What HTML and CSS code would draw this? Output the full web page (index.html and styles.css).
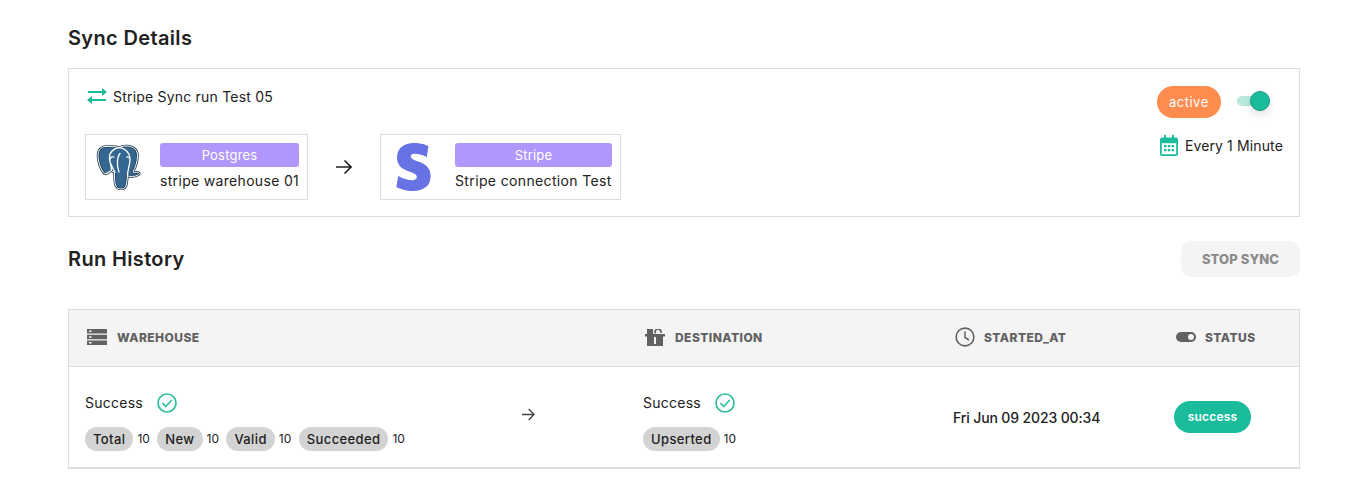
FILE: index.html
```html
<!DOCTYPE html>
<html lang="en">
<head>
<meta charset="utf-8">
<title>Sync Details</title>
<link rel="stylesheet" href="styles.css">
</head>
<body>
<main class="page">
  <h1 class="title first">Sync Details</h1>
  <section class="card">
    <div class="card-left">
      <div class="sync-name">
        <svg class="swap" viewBox="0 0 20 16" width="20" height="16"><path fill="#1abc9c" d="M1 3h14V0l5 4-5 4V5H1zM19 11H5V8l-5 4 5 4v-3h14z"/></svg>
        <span>Stripe Sync run Test 05</span>
      </div>
      <div class="connectors">
        <div class="conn conn-a">
          <svg class="logo-pg" viewBox="0 0 45 46" width="45" height="46">
            <path d="M12 2.500C6 2 2 5.500 2 11.500C2 17 4.500 25 7.500 28.500C9.500 30.500 12 30 15 26.500L18.500 28.500C18.500 33 18.500 38 19.500 41C20.500 44 22.500 45 25 45C28.500 45 30 43 30.500 40L31.500 32C34 32.500 39 33 42 31C44 30 43.500 28.500 42 28.300C40 28.300 38.500 28.800 37 28C39 24 41.500 18 41.500 12C41.500 6 38 2.500 31 2C28 1.800 25.500 2.500 23.500 3.500C20 2.500 16 2.700 12 2.500Z" fill="#336791" stroke="#1f3f57" stroke-width="2.600" stroke-linejoin="round"/>
            <path d="M12 2.500C6 2 2 5.500 2 11.500C2 17 4.500 25 7.500 28.500C9.500 30.500 12 30 15 26.500L18.500 28.500C18.500 33 18.500 38 19.500 41C20.500 44 22.500 45 25 45C28.500 45 30 43 30.500 40L31.500 32C34 32.500 39 33 42 31C44 30 43.500 28.500 42 28.300C40 28.300 38.500 28.800 37 28C39 24 41.500 18 41.500 12C41.500 6 38 2.500 31 2C28 1.800 25.500 2.500 23.500 3.500C20 2.500 16 2.700 12 2.500Z" fill="none" stroke="#fff" stroke-width="1" stroke-linejoin="round"/>
            <path d="M23.500 3.500C18 4.500 14 8 13.500 12.500C13 17 15.500 21 15.500 26.500M23.500 3.500C29 4 33.500 9 34 14C34.500 20 31.500 25 31.500 32M19 28.500C18 26 16 24 15 20M18 13c-2-.6-3.500 .3-3.500 1.800M31 13c1.500-.3 2.500 .4 2.500 1.700M14 27c-1 1.500-2.500 2.200-4 2.300M24 9.500C21 13 20.500 22 23 28" fill="none" stroke="#fff" stroke-width="1.300" stroke-linecap="round"/>
          </svg>
          <div class="conn-text">
            <div class="tag">Postgres</div>
            <div class="conn-name">stripe warehouse 01</div>
          </div>
        </div>
        <svg class="arrow-big" viewBox="0 0 16 16" width="16" height="16"><path d="M0 8h15M8.500 1.500 15 8l-6.500 6.500" fill="none" stroke="#212121" stroke-width="1.600"/></svg>
        <div class="conn conn-b">
          <svg class="logo-stripe" viewBox="3.400 0 17.200 24" width="35" height="48"><path fill="#6772e5" d="M13.976 9.150c-2.172-.806-3.356-1.426-3.356-2.409 0-.831.683-1.305 1.901-1.305 2.227 0 4.515.858 6.090 1.631l.890-5.494C18.252.975 15.697 0 12.165 0 9.667 0 7.589.654 6.104 1.872 4.560 3.147 3.757 4.992 3.757 7.218c0 4.039 2.467 5.760 6.476 7.219 2.585.920 3.445 1.574 3.445 2.583 0 .980-.840 1.545-2.354 1.545-1.875 0-4.965-.921-6.990-2.109l-.900 5.555C5.175 22.990 8.385 24 11.714 24c2.641 0 4.843-.624 6.328-1.813 1.664-1.305 2.525-3.236 2.525-5.732 0-4.128-2.524-5.851-6.594-7.305h.003z"/></svg>
          <div class="conn-text">
            <div class="tag">Stripe</div>
            <div class="conn-name">Stripe connection Test</div>
          </div>
        </div>
      </div>
    </div>
    <div class="card-right">
      <div class="state-row">
        <span class="active-pill">active</span>
        <span class="switch"><span class="switch-thumb"></span></span>
      </div>
      <div class="schedule">
        <svg viewBox="0 0 18 21" width="18" height="21"><path fill="#1abc9c" d="M2 2.500h2V0h2v2.500h6V0h2v2.500h2a2 2 0 0 1 2 2V19a2 2 0 0 1-2 2H2a2 2 0 0 1-2-2V4.500a2 2 0 0 1 2-2Zm-.2 5.700V19c0 .2.100.3.300.3h13.800c.2 0 .3-.1.300-.3V8.200Z"/><path fill="#1abc9c" d="M4 10h2.500v2.200H4zM7.800 10h2.500v2.200H7.800zM11.600 10h2.500v2.200h-2.500zM4 14h2.500v2.200H4zM7.800 14h2.500v2.200H7.800zM11.600 14h2.500v2.200h-2.500z"/></svg>
        <span>Every 1 Minute</span>
      </div>
    </div>
  </section>
  <div class="history-head">
    <h2 class="title">Run History</h2>
    <button class="stop" type="button">STOP SYNC</button>
  </div>
  <section class="table">
    <div class="row head">
      <div class="th">
        <svg viewBox="0 0 20 16" width="20" height="16"><path fill="#616161" fill-rule="evenodd" d="M0 0h20v4.500H0zM0 5.700h20v4.600H0zM0 11.500h20V16H0zM2 1.500v1.500h2.500V1.500zM2 7.200v1.500h2.500V7.200zM2 13v1.500h2.500V13z"/></svg>
        <span>WAREHOUSE</span>
      </div>
      <div></div>
      <div class="th">
        <svg viewBox="0 0 20 17" width="20" height="17"><path fill="#616161" fill-rule="evenodd" d="M2 0h6v5H2zM0 5h20v2.500h-2V17H2V7.500H0zM9 8v7h2V8z"/><path d="M10 4.500V3a3 3 0 0 1 6 0v1" fill="none" stroke="#616161" stroke-width="1.700"/></svg>
        <span>DESTINATION</span>
      </div>
      <div class="th th-time">
        <svg viewBox="0 0 20 20" width="20" height="20"><circle cx="10" cy="10" r="8.900" fill="none" stroke="#616161" stroke-width="1.600"/><path d="M10 4.500V10.500l4 2.500" fill="none" stroke="#616161" stroke-width="1.500"/></svg>
        <span>STARTED_AT</span>
      </div>
      <div class="th th-time">
        <svg viewBox="0 0 20 10" width="20" height="10"><rect width="20" height="10" rx="5" fill="#616161"/><circle cx="15" cy="5" r="3" fill="#f4f4f4"/></svg>
        <span>STATUS</span>
      </div>
    </div>
    <div class="row body">
      <div class="cell shifted">
        <div class="result"><span>Success</span>
          <svg viewBox="0 0 20 20" width="20" height="20"><circle cx="10" cy="10" r="9" fill="none" stroke="#2bbf9b" stroke-width="1.700"/><path d="m5.500 10 3.200 3.500 6-6.500" fill="none" stroke="#2bbf9b" stroke-width="1.700"/></svg>
        </div>
        <div class="counts">
          <span class="count"><span class="pill">Total</span>10</span>
          <span class="count"><span class="pill">New</span>10</span>
          <span class="count"><span class="pill">Valid</span>10</span>
          <span class="count"><span class="pill">Succeeded</span>10</span>
        </div>
      </div>
      <div class="cell arrow-cell">
        <svg viewBox="0 0 13 13" width="13" height="13"><path d="M0 6.500h12M6.700 1 12 6.500 6.700 12" fill="none" stroke="#424242" stroke-width="1.300"/></svg>
      </div>
      <div class="cell shifted">
        <div class="result"><span>Success</span>
          <svg viewBox="0 0 20 20" width="20" height="20"><circle cx="10" cy="10" r="9" fill="none" stroke="#2bbf9b" stroke-width="1.700"/><path d="m5.500 10 3.200 3.500 6-6.500" fill="none" stroke="#2bbf9b" stroke-width="1.700"/></svg>
        </div>
        <div class="counts">
          <span class="count"><span class="pill">Upserted</span>10</span>
        </div>
      </div>
      <div class="cell date">Fri Jun 09 2023 00:34</div>
      <div class="cell status-cell"><span class="success-pill">success</span></div>
    </div>
  </section>
</main>
</body>
</html>
```
FILE: styles.css
```css
* { box-sizing: border-box; }
html, body { margin: 0; padding: 0; background: #fff; }
body { font-family: Inter, "Liberation Sans", sans-serif; color: #212121; }
.page { width: 1353px; height: 499px; padding: 24px 53px 0 68px; overflow: hidden; }
.title { margin: 0; font-size: 20px; line-height: 28px; font-weight: 600; letter-spacing: .35px; color: #212121; }
.first { height: 44px; }

.card { height: 149px; border: 1px solid #ddd; display: flex; justify-content: space-between; padding: 17px 16px 0 16px; }
.sync-name { display: flex; align-items: center; gap: 6px; height: 20px; margin-left: 2px; font-size: 14px; letter-spacing: .2px; font-weight: 400; }
.connectors { display: flex; align-items: center; margin-top: 28px; }
.conn { height: 66px; border: 1px solid #ddd; display: flex; align-items: center; }
.conn-a { width: 223px; padding-left: 10px; gap: 19px; }
.conn-b { width: 241px; padding-left: 15px; gap: 24px; }
.arrow-big { margin: 0 28px 0 28px; }
.conn-text { display: flex; flex-direction: column; margin-top: -1px; }
.conn-a .conn-text { width: 139px; }
.conn-b .conn-text { width: 157px; }
.tag { height: 24px; line-height: 24px; background: #b197fc; border-radius: 3px; color: #fff; text-align: center; font-size: 13px; letter-spacing: .2px; }
.conn-name { margin-top: 4px; line-height: 20px; font-size: 14px; letter-spacing: .32px; white-space: nowrap; }
.conn-b .conn-name { letter-spacing: .36px; }

.card-right { display: flex; flex-direction: column; align-items: flex-start; }
.state-row { display: flex; align-items: center; }
.active-pill { width: 64px; height: 32px; border-radius: 16px; background: #ff8c4f; color: #fff; font-size: 13px; line-height: 32px; text-align: center; letter-spacing: .5px; }
.switch { position: relative; display: block; width: 24px; height: 10px; margin: -2px 0 0 16px; border-radius: 5px; background: #b9e8dc; }
.switch-thumb { position: absolute; right: -9px; top: -5px; width: 20px; height: 20px; border-radius: 50%; background: #1abc9c; border: 1px solid #169a80; box-shadow: 0 3px 8px rgba(0,0,0,.14); }
.schedule { display: flex; align-items: center; gap: 7px; margin: 17px 0 0 3px; font-size: 14px; letter-spacing: .13px; }

.history-head { display: flex; justify-content: space-between; align-items: center; height: 36px; margin: 24px 0 32px; }
.stop { width: 119px; height: 36px; border: 0; border-radius: 10px; background: #f4f4f4; color: #8a8a8a; font: 800 13px Inter, "Liberation Sans", sans-serif; letter-spacing: .1px; padding: 0; }

.table { height: 160px; border: 1px solid #ddd; border-bottom-width: 2px; }
.row { display: grid; grid-template-columns: 437px 121px 310px 221px 1fr; padding-left: 16px; }
.head { height: 57px; background: #f4f4f4; border-bottom: 1px solid #ddd; align-items: center; padding-bottom: 2px; }
.th { display: flex; align-items: center; gap: 10px; padding-left: 2px; font-size: 12px; font-weight: 800; letter-spacing: .45px; color: #616161; }
.th-time { gap: 9px; }
.body { height: 100px; align-items: center; }
.shifted { margin-top: 9px; }
.result { display: flex; align-items: center; gap: 14px; height: 20px; font-size: 14px; letter-spacing: .25px; }
.counts { display: flex; gap: 7.5px; margin-top: 14px; }
.count { display: flex; align-items: center; gap: 4px; font-size: 12px; }
.pill { height: 24px; line-height: 24px; padding: 0 8px; border-radius: 12px; background: #d3d3d3; font-size: 13px; font-weight: 500; letter-spacing: .38px; }
.arrow-cell { display: flex; margin-top: -6px; }
.date { font-size: 14px; font-weight: 500; letter-spacing: -.13px; }
.success-pill { display: block; width: 77px; height: 32px; line-height: 32px; border-radius: 16px; background: #1abc9c; color: #fff; text-align: center; font-size: 12px; font-weight: 600; letter-spacing: .2px; }
```
